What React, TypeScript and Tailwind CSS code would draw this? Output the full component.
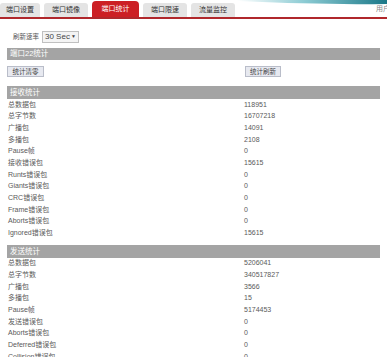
const FONT = { fontFamily: '"Liberation Sans", "Noto Sans CJK SC", sans-serif' };

const TABS = ["端口设置", "端口镜像", "端口统计", "端口限速", "流量监控"];

const RX: [string, string][] = [
  ["总数据包", "118951"],
  ["总字节数", "16707218"],
  ["广播包", "14091"],
  ["多播包", "2108"],
  ["Pause帧", "0"],
  ["接收错误包", "15615"],
  ["Runts错误包", "0"],
  ["Giants错误包", "0"],
  ["CRC错误包", "0"],
  ["Frame错误包", "0"],
  ["Aborts错误包", "0"],
  ["Ignored错误包", "15615"],
];

const TX: [string, string][] = [
  ["总数据包", "5206041"],
  ["总字节数", "340517827"],
  ["广播包", "3566"],
  ["多播包", "15"],
  ["Pause帧", "5174453"],
  ["发送错误包", "0"],
  ["Aborts错误包", "0"],
  ["Deferred错误包", "0"],
  ["Collision错误包", "0"],
];

function Bar({ title, h }: { title: string; h: string }) {
  return (
    <div className={`flex items-center bg-[#a4a4a4] pl-[3px] text-[7.5px] text-white ${h}`}>
      {title}
    </div>
  );
}

function Rows({ rows }: { rows: [string, string][] }) {
  return (
    <div className="flex flex-col">
      {rows.map(([k, v], i) => (
        <div key={i} className="grid h-[11.7px] grid-cols-[237px_1fr] items-center text-[7px] text-[#5a5a5a]">
          <span className="pl-[1px]">{k}</span>
          <span>{v}</span>
        </div>
      ))}
    </div>
  );
}

export default function App() {
  return (
    <div style={FONT} className="relative h-[357px] w-[387px] overflow-hidden bg-white">
      {/* top-right swoosh */}
      <svg className="absolute right-0 top-0" width="150" height="8" viewBox="0 0 150 8" aria-hidden>
        <defs>
          <linearGradient id="sw" x1="0" x2="1" y1="0" y2="0">
            <stop offset="0" stopColor="#ffffff" />
            <stop offset="0.45" stopColor="#8ccbd3" />
            <stop offset="1" stopColor="#1b7888" />
          </linearGradient>
        </defs>
        <path d="M0 0 L150 0 L150 4 Q75 5 0 1 Z" fill="url(#sw)" />
      </svg>
      <span className="absolute right-[-3px] top-[5px] text-[7px] leading-none text-[#888]">用户</span>

      {/* tabs */}
      <div className="flex h-[19px] items-end gap-[4px] border-b-2 border-[#b0282c]">
        {TABS.map((t, i) =>
          i === 2 ? (
            <div
              key={t}
              className="flex h-[16px] w-[47px] items-center justify-center rounded-t-[4px] bg-[#cc1f24] text-[7px] text-white"
            >
              {t}
            </div>
          ) : (
            <div
              key={t}
              className={`flex h-[14px] items-center justify-center rounded-t-[3px] bg-[#e4e4e4] text-[7px] text-[#333] ${i === 0 ? "w-[40px]" : "w-[44px]"}`}
            >
              {t}
            </div>
          ),
        )}
      </div>

      <div className="px-[7px]">
        {/* refresh rate */}
        <div className="mt-[12px] flex h-[12px] items-center gap-[3px] pl-[6px] text-[6.5px] text-[#555]">
          <span>刷新速率</span>
          <div className="flex h-[12px] w-[37px] items-center justify-between border border-[#c0c0c0] bg-[#f4f4f4] px-[2px] text-[8px] text-[#444]">
            <span>30 Sec</span>
            <span className="text-[5px]">▼</span>
          </div>
        </div>

        <div className="mt-[5px]">
          <Bar title="端口22统计" h="h-[12px]" />
        </div>

        {/* buttons */}
        <div className="mt-[6px] grid h-[11px] grid-cols-[238px_1fr]">
          <button className="h-[11px] w-[37px] border border-[#b9bdc9] bg-[#e7e9f0] text-[6.5px] text-[#444]">
            统计清零
          </button>
          <button className="h-[11px] w-[36px] border border-[#b9bdc9] bg-[#e7e9f0] text-[6.5px] text-[#444]">
            统计刷新
          </button>
        </div>

        <div className="mt-[9px]">
          <Bar title="接收统计" h="h-[13px]" />
        </div>
        <Rows rows={RX} />

        <div className="mt-[5.5px]">
          <Bar title="发送统计" h="h-[13px]" />
        </div>
        <Rows rows={TX} />
      </div>
    </div>
  );
}
